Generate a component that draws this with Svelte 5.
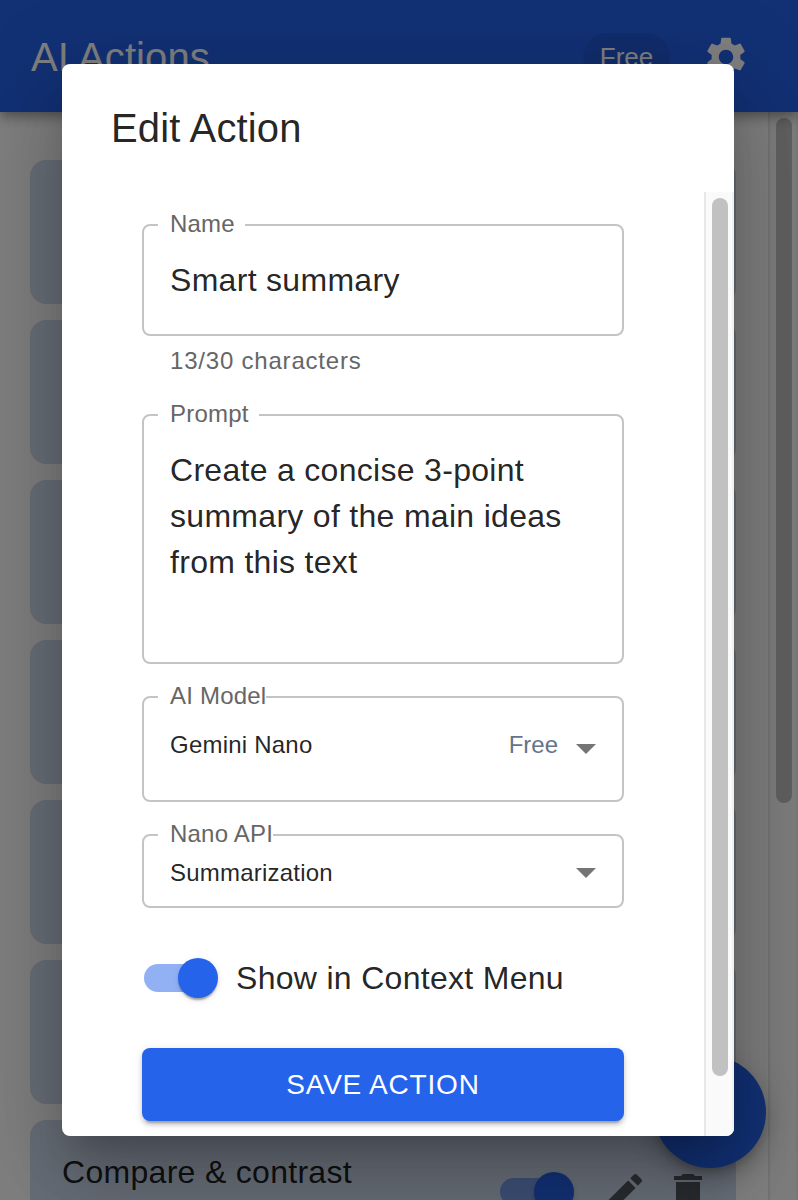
<script>
  const cards = [{}, {}, {}, {}, {}, {}, { title: 'Compare & contrast' }];
</script>

<div class="page">
  <header class="appbar">
    <h1>AI Actions</h1>
    <span class="chip">Free</span>
    <svg class="gear" viewBox="0 0 24 24" aria-hidden="true"><path d="M19.14 12.94c.04-.3.06-.61.06-.94 0-.32-.02-.64-.07-.94l2.03-1.58c.18-.14.23-.41.12-.61l-1.92-3.32c-.12-.22-.37-.29-.59-.22l-2.39.96c-.5-.38-1.03-.7-1.62-.94l-.36-2.54c-.04-.24-.24-.41-.48-.41h-3.84c-.24 0-.43.17-.47.41l-.36 2.54c-.59.24-1.13.57-1.62.94l-2.39-.96c-.22-.08-.47 0-.59.22L2.74 8.87c-.12.21-.08.47.12.61l2.03 1.58c-.05.3-.09.63-.09.94s.02.64.07.94l-2.03 1.58c-.18.14-.23.41-.12.61l1.92 3.32c.12.22.37.29.59.22l2.39-.96c.5.38 1.03.7 1.62.94l.36 2.54c.05.24.24.41.48.41h3.84c.24 0 .44-.17.47-.41l.36-2.54c.59-.24 1.13-.56 1.62-.94l2.39.96c.22.08.47 0 .59-.22l1.92-3.32c.12-.22.07-.47-.12-.61l-2.01-1.58zM12 15.6c-1.98 0-3.6-1.62-3.6-3.6s1.62-3.6 3.6-3.6 3.6 1.62 3.6 3.6-1.62 3.6-3.6 3.6z"/></svg>
  </header>

  <div class="under">
    <main class="list">
      {#each cards as card}
        <article class="card">
          {#if card.title}
            <div class="card-title">{card.title}</div>
            <div class="card-actions">
              <span class="switch"><span class="track"></span><span class="knob"></span></span>
              <svg class="act pencil" viewBox="0 0 24 24" aria-hidden="true"><path d="M3 17.25V21h3.75L17.81 9.94l-3.75-3.75L3 17.25zM20.71 7.04c.39-.39.39-1.02 0-1.41l-2.34-2.34c-.39-.39-1.02-.39-1.41 0l-1.83 1.83 3.75 3.75 1.83-1.83z"/></svg>
              <svg class="act" viewBox="0 0 24 24" aria-hidden="true"><path d="M6 19c0 1.1.9 2 2 2h8c1.1 0 2-.9 2-2V7H6v12zM19 4h-3.5l-1-1h-5l-1 1H5v2h14V4z"/></svg>
            </div>
          {/if}
        </article>
      {/each}
    </main>
    <div class="rail page-rail"><div class="thumb page-thumb"></div></div>
  </div>

  <div class="fab"></div>
  <div class="backdrop"></div>

  <section class="dialog" role="dialog">
    <h2>Edit Action</h2>
    <div class="dialog-body">
      <form class="form">
        <div class="field name">
          <span class="label">Name</span>
          <div class="value">Smart summary</div>
        </div>
        <div class="helper">13/30 characters</div>

        <div class="field prompt">
          <span class="label">Prompt</span>
          <div class="value">Create a concise 3-point summary of the main ideas from this text</div>
        </div>

        <div class="field select model">
          <span class="label tight">AI Model</span>
          <span class="sel-text">Gemini Nano</span>
          <span class="tag">Free</span>
          <svg class="arrow" viewBox="0 0 20 10" aria-hidden="true"><path d="M0 0l10 10L20 0z"/></svg>
        </div>

        <div class="field select api">
          <span class="label tight">Nano API</span>
          <span class="sel-text">Summarization</span>
          <svg class="arrow" viewBox="0 0 20 10" aria-hidden="true"><path d="M0 0l10 10L20 0z"/></svg>
        </div>

        <div class="toggle-row">
          <span class="switch light"><span class="track"></span><span class="knob"></span></span>
          <span class="toggle-label">Show in Context Menu</span>
        </div>

        <button type="button" class="save">SAVE ACTION</button>
      </form>
      <div class="rail dialog-rail"><div class="thumb dialog-thumb"></div></div>
    </div>
  </section>
</div>

<style>
  :global(body) {
    margin: 0;
    background: #fff;
  }

  .page {
    position: relative;
    width: 798px;
    height: 1200px;
    overflow: hidden;
    background: #fff;
    font-family: "Liberation Sans", Arial, sans-serif;
    color: rgba(0, 0, 0, 0.87);
  }

  .appbar {
    position: relative;
    z-index: 2;
    box-sizing: border-box;
    height: 112px;
    display: flex;
    align-items: center;
    padding: 2px 48px 0 31px;
    background: #2563eb;
    color: #fff;
    box-shadow: 0 4px 8px -2px rgba(0, 0, 0, 0.2), 0 8px 10px 0 rgba(0, 0, 0, 0.14), 0 2px 20px 0 rgba(0, 0, 0, 0.12);
  }

  h1 {
    margin: 0;
    flex: 1;
    font-size: 40px;
    font-weight: 400;
    letter-spacing: 0.1px;
  }

  .chip {
    box-sizing: border-box;
    width: 87px;
    height: 48px;
    line-height: 48px;
    text-align: center;
    border-radius: 24px;
    font-size: 26px;
    background: rgba(0, 0, 0, 0.08);
  }

  .gear {
    width: 48px;
    height: 48px;
    margin-left: 32px;
    fill: #fff;
  }

  .under {
    display: flex;
    height: 1088px;
  }

  .list {
    box-sizing: border-box;
    width: 768px;
    padding: 48px 32px 0 30px;
    display: flex;
    flex-direction: column;
    gap: 16px;
    overflow: hidden;
  }

  .card {
    flex: none;
    box-sizing: border-box;
    height: 144px;
    display: flex;
    justify-content: space-between;
    padding: 32px 24px 0 32px;
    border-radius: 16px;
    background: #d0dcf0;
  }

  .card-title {
    font-size: 32px;
    line-height: 40px;
    letter-spacing: 0.3px;
  }

  .card-actions {
    display: flex;
    align-items: center;
    height: 48px;
    margin-top: 16px;
    gap: 16px;
  }

  .act {
    width: 48px;
    height: 48px;
    fill: rgba(0, 0, 0, 0.6);
  }

  .pencil {
    margin-left: 10px;
  }

  .switch {
    position: relative;
    display: block;
    flex: none;
    width: 74px;
    height: 40px;
  }

  .track {
    position: absolute;
    left: 0;
    top: 6px;
    width: 68px;
    height: 28px;
    border-radius: 14px;
    background: #2563eb;
    opacity: 0.5;
  }

  .knob {
    position: absolute;
    right: 0;
    top: 0;
    width: 40px;
    height: 40px;
    border-radius: 50%;
    background: #2563eb;
    box-shadow: 0 4px 2px -2px rgba(0, 0, 0, 0.2), 0 2px 2px 0 rgba(0, 0, 0, 0.14), 0 2px 6px 0 rgba(0, 0, 0, 0.12);
  }

  .rail {
    box-sizing: border-box;
    flex: none;
    width: 30px;
    padding: 6px 4px 0 6px;
    background: #fafafa;
    border-left: 2px solid #e8e8e8;
    border-right: 2px solid #f0f0f0;
  }

  .thumb {
    width: 16px;
    border-radius: 8px;
    background: #c1c1c1;
  }

  .page-thumb {
    height: 685px;
  }

  .dialog-thumb {
    height: 878px;
  }

  .fab {
    position: absolute;
    left: 654px;
    top: 1056px;
    width: 112px;
    height: 112px;
    border-radius: 50%;
    background: #2563eb;
    box-shadow: 0 6px 10px -2px rgba(0, 0, 0, 0.2), 0 12px 20px 0 rgba(0, 0, 0, 0.14), 0 2px 36px 0 rgba(0, 0, 0, 0.12);
  }

  .backdrop {
    position: absolute;
    inset: 0;
    z-index: 3;
    background: rgba(0, 0, 0, 0.5);
  }

  .dialog {
    position: absolute;
    z-index: 4;
    left: 62px;
    top: 64px;
    width: 672px;
    height: 1072px;
    display: flex;
    flex-direction: column;
    overflow: hidden;
    background: #fff;
    border-radius: 8px;
    box-shadow: 0 22px 30px -14px rgba(0, 0, 0, 0.2), 0 48px 76px 6px rgba(0, 0, 0, 0.14), 0 18px 92px 16px rgba(0, 0, 0, 0.12);
  }

  h2 {
    box-sizing: border-box;
    flex: none;
    height: 128px;
    margin: 0;
    padding: 40px 49px 0;
    font-size: 40px;
    line-height: 48px;
    font-weight: 400;
    letter-spacing: 0.15px;
  }

  .dialog-body {
    flex: 1;
    min-height: 0;
    display: flex;
    overflow: hidden;
  }

  .form {
    flex: 1;
    min-width: 0;
    padding: 32px 80px 0;
    display: flex;
    flex-direction: column;
    align-items: stretch;
  }

  .field {
    position: relative;
    box-sizing: border-box;
    flex: none;
    border: 2px solid #c4c4c4;
    border-radius: 8px;
    padding: 0 26px;
  }

  .label {
    position: absolute;
    left: 14px;
    top: -16px;
    padding: 0 10px 0 12px;
    background: #fff;
    font-size: 24px;
    line-height: 28px;
    letter-spacing: 0.2px;
    color: #666;
    white-space: nowrap;
  }

  .label.tight {
    padding-right: 0;
  }

  .value {
    font-size: 32px;
    line-height: 46px;
    letter-spacing: 0.3px;
    color: rgba(0, 0, 0, 0.87);
  }

  .name {
    height: 112px;
    display: flex;
    align-items: center;
  }

  .helper {
    margin-top: 10px;
    padding-left: 28px;
    font-size: 24px;
    line-height: 30px;
    letter-spacing: 0.8px;
    color: #666;
  }

  .prompt {
    height: 250px;
    margin-top: 38px;
    padding-top: 31px;
  }

  .select {
    display: flex;
    align-items: center;
    font-size: 24px;
    line-height: 28px;
    letter-spacing: 0.22px;
  }

  .sel-text {
    flex: 1;
  }

  .model {
    height: 106px;
    margin-top: 32px;
    padding-bottom: 10px;
    align-items: flex-start;
    padding-top: 33px;
  }

  .api {
    height: 74px;
    margin-top: 32px;
    padding-top: 4px;
  }

  .tag {
    color: #64748b;
    margin-right: 18px;
    letter-spacing: 0;
  }

  .arrow {
    width: 20px;
    height: 10px;
    flex: none;
    fill: #757575;
  }

  .model .arrow {
    margin-top: 13px;
  }

  .toggle-row {
    display: flex;
    align-items: center;
    height: 40px;
    margin-top: 50px;
    padding-left: 2px;
    gap: 18px;
  }

  .toggle-label {
    font-size: 32px;
    letter-spacing: 0.3px;
  }

  .save {
    flex: none;
    height: 73px;
    margin-top: 50px;
    border: 0;
    border-radius: 8px;
    background: #2563eb;
    color: #fff;
    font-family: inherit;
    font-size: 28px;
    letter-spacing: 0.8px;
    box-shadow: 0 6px 2px -4px rgba(0, 0, 0, 0.2), 0 4px 4px 0 rgba(0, 0, 0, 0.14), 0 2px 10px 0 rgba(0, 0, 0, 0.12);
  }
</style>
